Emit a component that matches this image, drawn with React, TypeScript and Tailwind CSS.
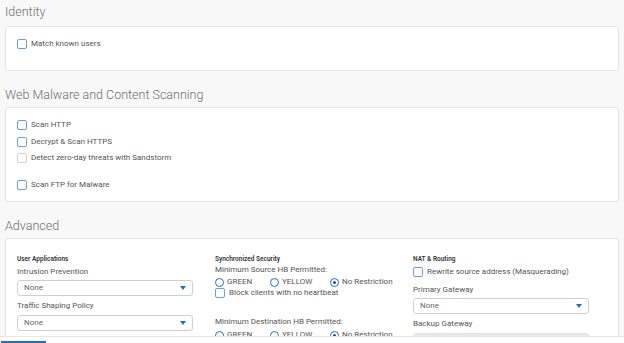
import React from 'react';

const Check = ({ label, disabled = false }: { label: string; disabled?: boolean }) => (
  <div className="flex items-center gap-[4px] h-[11px]">
    <span
      className={`w-[10px] h-[10px] rounded-[2px] border bg-white shrink-0 ${
        disabled ? 'border-[#d0d0d0]' : 'border-[#6a9fd6]'
      }`}
    />
    <span className="text-[8px] leading-none text-[#555]">{label}</span>
  </div>
);

const Radio = ({ label, checked = false }: { label: string; checked?: boolean }) => (
  <div className="flex items-center gap-[3px]">
    <span className="w-[9px] h-[9px] rounded-full border-[1.5px] border-[#1f6fc0] bg-white flex items-center justify-center shrink-0">
      {checked && <span className="w-[3px] h-[3px] rounded-full bg-[#1f4f8a]" />}
    </span>
    <span className="text-[8px] leading-none text-[#555]">{label}</span>
  </div>
);

const Select = ({ disabled = false }: { disabled?: boolean }) =>
  disabled ? (
    <div className="w-[176px] h-[16px] rounded-[3px] bg-[#e8e8e8] border border-[#e0e0e0]" />
  ) : (
    <div className="w-[176px] h-[16px] rounded-[3px] border border-[#cfcfcf] bg-white flex items-center justify-between px-[6px]">
      <span className="text-[8px] leading-none text-[#666]">None</span>
      <svg width="6" height="4" viewBox="0 0 6 4">
        <path d="M0 0h6L3 4z" fill="#1f6fc0" />
      </svg>
    </div>
  );

const Heading = ({ children, first = false }: { children: React.ReactNode; first?: boolean }) => (
  <div className={`${first ? 'h-[26px] pb-[8px]' : 'h-[36px] pb-[6px]'} flex items-end px-[5px]`}>
    <span className="text-[12.5px] leading-none font-light text-[#6f6f6f]">{children}</span>
  </div>
);

const Card = ({ className, children }: { className: string; children: React.ReactNode }) => (
  <div className={`mx-[5px] bg-white border border-[#e4e4e4] rounded-[3px] pl-[11px] ${className}`}>
    {children}
  </div>
);

const Small = ({ children }: { children: React.ReactNode }) => (
  <div className="text-[8px] leading-none text-[#555]">{children}</div>
);

const ColTitle = ({ children }: { children: React.ReactNode }) => (
  <div className="text-[6.5px] leading-none font-semibold text-[#333]">{children}</div>
);

export default function App() {
  return (
    <div
      className="h-[343px] w-[624px] flex flex-col bg-[#f8f8f8] overflow-hidden"
      style={{ fontFamily: 'Roboto, "Noto Sans", sans-serif' }}
    >
      <div className="flex-1 overflow-hidden">
        <Heading first>Identity</Heading>
        <Card className="h-[45px] pt-[11px]">
          <Check label="Match known users" />
        </Card>

        <Heading>Web Malware and Content Scanning</Heading>
        <Card className="h-[95px] pt-[11px]">
          <Check label="Scan HTTP" />
          <div className="mt-[6px]">
            <Check label="Decrypt & Scan HTTPS" />
          </div>
          <div className="mt-[5px]">
            <Check label="Detect zero-day threats with Sandstorm" disabled />
          </div>
          <div className="mt-[16px]">
            <Check label="Scan FTP for Malware" />
          </div>
        </Card>

        <Heading>Advanced</Heading>
        <Card className="h-[120px] pt-[17px] grid grid-cols-[198px_198px_198px]">
          <div>
            <ColTitle>User Applications</ColTitle>
            <div className="mt-[5px]">
              <Small>Intrusion Prevention</Small>
            </div>
            <div className="mt-[4px]">
              <Select />
            </div>
            <div className="mt-[6px]">
              <Small>Traffic Shaping Policy</Small>
            </div>
            <div className="mt-[5px]">
              <Select />
            </div>
          </div>

          <div>
            <ColTitle>Synchronized Security</ColTitle>
            <div className="mt-[3px]">
              <Small>Minimum Source HB Permitted:</Small>
            </div>
            <div className="mt-[4px] flex">
              <div className="w-[55px]"><Radio label="GREEN" /></div>
              <div className="w-[60px]"><Radio label="YELLOW" /></div>
              <Radio label="No Restriction" checked />
            </div>
            <div className="mt-[1px]">
              <Check label="Block clients with no heartbeat" />
            </div>
            <div className="mt-[19px]">
              <Small>Minimum Destination HB Permitted:</Small>
            </div>
            <div className="mt-[5px] flex">
              <div className="w-[55px]"><Radio label="GREEN" /></div>
              <div className="w-[60px]"><Radio label="YELLOW" /></div>
              <Radio label="No Restriction" checked />
            </div>
          </div>

          <div>
            <ColTitle>NAT &amp; Routing</ColTitle>
            <div className="mt-[4px]">
              <Check label="Rewrite source address (Masquerading)" />
            </div>
            <div className="mt-[8px]">
              <Small>Primary Gateway</Small>
            </div>
            <div className="mt-[4px]">
              <Select />
            </div>
            <div className="mt-[6px]">
              <Small>Backup Gateway</Small>
            </div>
            <div className="mt-[5px]">
              <Select disabled />
            </div>
          </div>
        </Card>
      </div>

      <div className="h-[7px] shrink-0 bg-white border-t border-[#e6e6e6] flex items-end">
        <div className="ml-[1px] w-[45px] h-[2px] bg-[#1f6fc0]" />
      </div>
    </div>
  );
}
